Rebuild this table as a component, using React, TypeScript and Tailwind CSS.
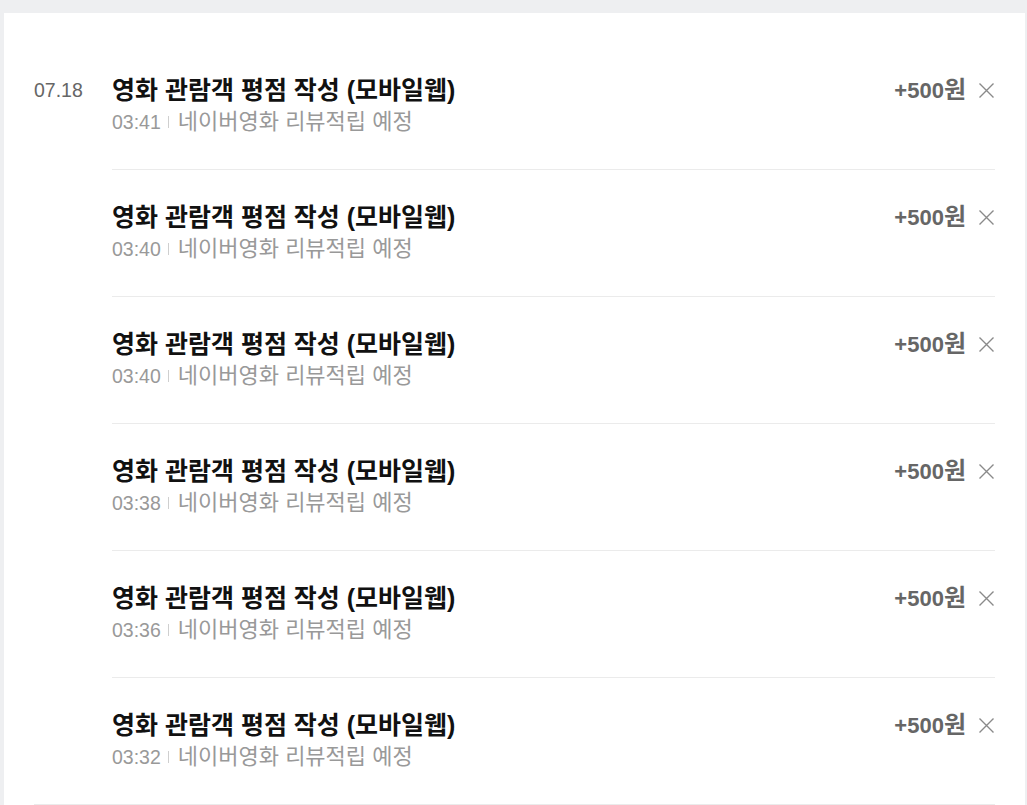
const rows = ["03:41", "03:40", "03:40", "03:38", "03:36", "03:32"];

const CloseIcon = () => (
  <svg width="17" height="17" viewBox="0 0 17 17" fill="none">
    <path d="M1.5 1.5L15.5 15.5M15.5 1.5L1.5 15.5" stroke="#8a8a8a" strokeWidth="1.4" />
  </svg>
);

const Row = (obj: { time: string; first: boolean }) => {
  return (
    <li
      className={
        "flex items-start justify-between pt-[34px] pb-[33px] " +
        (obj.first ? "" : "border-t border-[#ebebeb]")
      }
    >
      <div>
        <div className="text-[25px] leading-[26px] font-bold text-[#111]">
          영화 관람객 평점 작성 (모바일웹)
        </div>
        <div className="mt-[5px] flex items-center text-[19.5px] leading-[28px] text-[#999]">
          <span>{obj.time}</span>
          <span className="ml-[7px] mr-[9px] h-[12px] w-px bg-[#cfcfcf]" />
          <span className="text-[22px]">네이버영화 리뷰적립 예정</span>
        </div>
      </div>
      <div className="flex items-center">
        <span className="text-[22px] leading-[26px] font-bold text-[#666]">
          +500<span className="text-[24px]">원</span>
        </span>
        <button className="ml-[12px] flex h-[26px] items-center">
          <CloseIcon />
        </button>
      </div>
    </li>
  );
};

export default function App() {
  return (
    <div
      className="min-h-screen bg-[#eeeff1] pt-[13px] pl-[4px] pr-[2px]"
      style={{ fontFamily: '"Liberation Sans", "Noto Sans CJK KR", sans-serif' }}
    >
      <div className="bg-white px-[30px] pt-[30px] min-h-[792px]">
        <div className="flex border-b border-[#ebebeb]">
          <div className="w-[78px] shrink-0 pt-[34px] text-[19.5px] leading-[26px] text-[#666]">
            07.18
          </div>
          <ul className="flex-1">
            {rows.map((t, i) => (
              <Row key={i} time={t} first={i === 0} />
            ))}
          </ul>
        </div>
      </div>
    </div>
  );
}
